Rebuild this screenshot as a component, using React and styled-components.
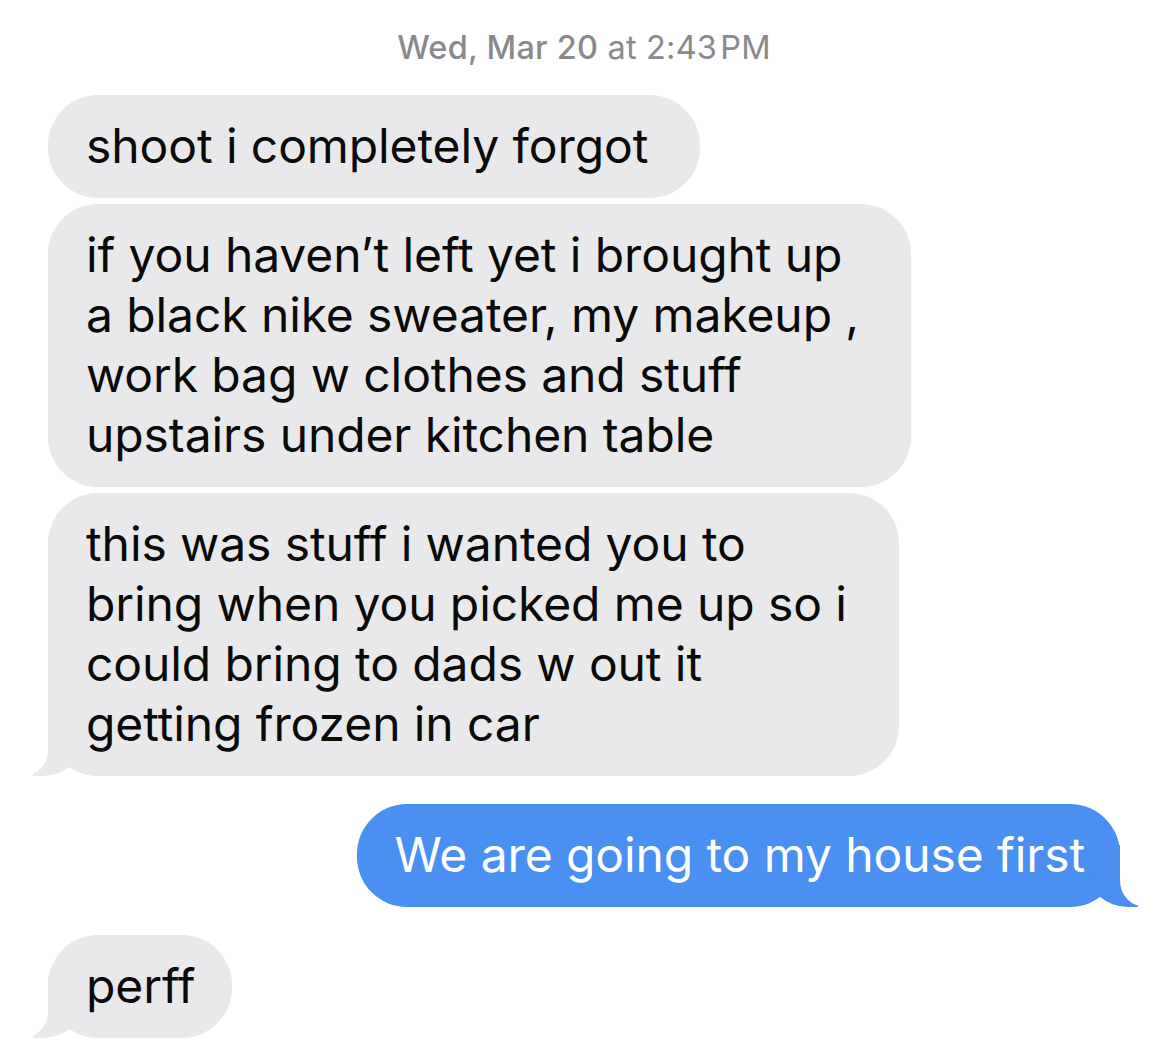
import React from 'react';
import styled, { createGlobalStyle, css } from 'styled-components';

const GlobalStyle = createGlobalStyle`
  html, body {
    margin: 0;
    padding: 0;
    background: #ffffff;
  }
  body {
    font-family: Inter, "Liberation Sans", Arial, sans-serif;
    font-variant-ligatures: none;
    -webkit-font-smoothing: antialiased;
  }
`;

const Thread = styled.div`
  width: 1170px;
  min-height: 1060px;
  box-sizing: border-box;
  padding: 30px 50px 0 48px;
  display: flex;
  flex-direction: column;
  overflow: hidden;
`;

const Stamp = styled.div`
  text-align: center;
  color: #8a8a8e;
  font-size: 32.5px;
  line-height: 36px;
  margin-bottom: 29px;
  letter-spacing: 0.2px;

  b {
    font-weight: 500;
  }
`;

const Group = styled.div`
  display: flex;
  flex-direction: column;
  align-items: ${p => (p.$sent ? 'flex-end' : 'flex-start')};
  gap: 6px;
  margin-bottom: 28px;
`;

const tail = (bg, sent) => css`
  &::before,
  &::after {
    content: '';
    position: absolute;
    bottom: 0;
    height: 62px;
    z-index: -1;
  }
  &::before {
    ${sent ? 'right: -18px;' : 'left: -15px;'}
    width: 50px;
    background: ${bg};
    ${sent
      ? 'border-bottom-left-radius: 40px 36px;'
      : 'border-bottom-right-radius: 40px 36px;'}
  }
  &::after {
    ${sent ? 'right: -70px;' : 'left: -70px;'}
    width: 70px;
    background: #ffffff;
    ${sent
      ? 'border-bottom-left-radius: 26px;'
      : 'border-bottom-right-radius: 26px;'}
  }
`;

const Bubble = styled.div`
  position: relative;
  box-sizing: border-box;
  padding: 21px ${p => (p.$sent ? '35px' : p.$short ? '37px' : '52px')} 22px 38px;
  border-radius: 50px;
  font-size: 48px;
  line-height: 60px;
  letter-spacing: -0.1px;
  white-space: pre-line;
  background: ${p => (p.$sent ? '#4a8ff2' : '#e9e9eb')};
  color: ${p => (p.$sent ? '#ffffff' : '#0a0a0a')};
  z-index: 0;

  ${p => p.$tail && tail(p.$sent ? '#4a8ff2' : '#e9e9eb', p.$sent)}
`;

const messages = [
  {
    sent: false,
    items: [
      'shoot i completely forgot',
      'if you haven\u2019t left yet i brought up\na black nike sweater, my makeup ,\nwork bag w clothes and stuff\nupstairs under kitchen table',
      'this was stuff i wanted you to\nbring when you picked me up so i\ncould bring to dads w out it\ngetting frozen in car',
    ],
  },
  { sent: true, items: ['We are going to my house first'] },
  { sent: false, items: ['perff'], short: true },
];

export default function App() {
  return (
    <>
      <GlobalStyle />
      <Thread>
        <Stamp>
          <b>Wed, Mar 20</b> at 2:43&#8202;PM
        </Stamp>
        {messages.map((g, gi) => (
          <Group key={gi} $sent={g.sent}>
            {g.items.map((text, i) => (
              <Bubble
                key={i}
                $sent={g.sent}
                $short={g.short}
                $tail={i === g.items.length - 1}
              >
                {text}
              </Bubble>
            ))}
          </Group>
        ))}
      </Thread>
    </>
  );
}
